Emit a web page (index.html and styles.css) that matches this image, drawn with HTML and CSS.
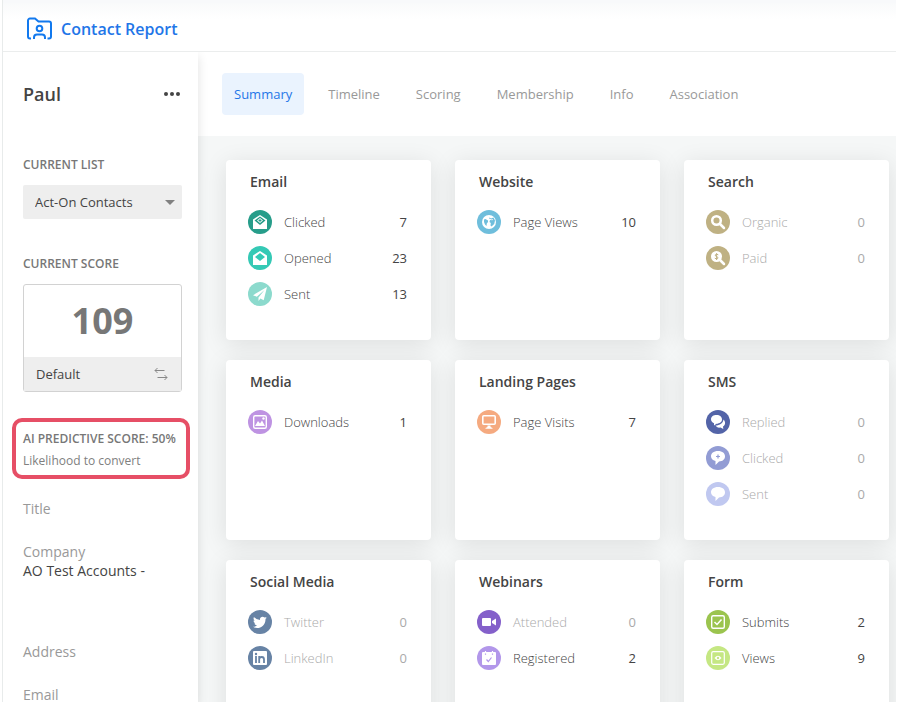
FILE: index.html
```html
<!DOCTYPE html>
<html lang="en">
  <head>
    <meta charset="UTF-8" />
    <meta name="viewport" content="width=device-width, initial-scale=1.0" />
    <title>Contact Report</title>
    <link rel="stylesheet" href="styles.css" />
  </head>
  <body>
    <div class="app">
      <header class="header">
        <svg class="header-icon" viewBox="0 0 26 24" aria-hidden="true">
          <path d="M5 21.5H4a2 2 0 0 1-2-2V3.500a2 2 0 0 1 2-2H9l3.500 3H23a2 2 0 0 1 2 2v13a2 2 0 0 1-2 2H21.500" />
          <circle cx="13.500" cy="11.500" r="2.800" />
          <path d="M8 22v-1.500q0-3 3-3h5q3 0 3 3V22" />
        </svg>
        <h1>Contact Report</h1>
      </header>

      <div class="body">
        <aside class="sidebar">
          <div class="contact">
            <h2>Paul</h2>
            <button type="button" class="more-btn" aria-label="More actions">
              <svg width="18" height="6" viewBox="0 0 18 6">
                <circle cx="2" cy="3" r="2" />
                <circle cx="8" cy="3" r="2" />
                <circle cx="14" cy="3" r="2" />
              </svg>
            </button>
          </div>

          <label class="label" for="list">CURRENT LIST</label>
          <div class="select">
            <select id="list">
              <option>Act-On Contacts</option>
            </select>
          </div>

          <h3 class="label">CURRENT SCORE</h3>
          <div class="score">
            <div class="score-value">109</div>
            <div class="score-footer">
              <span>Default</span>
              <button type="button" class="swap-btn" aria-label="Switch score">
                <svg width="14" height="14" viewBox="0 0 14 14">
                  <path d="M10.500 3.500H1M3.500 1L1 3.500L3.500 6M3.500 10.500H13M10.500 8L13 10.500L10.500 13" />
                </svg>
              </button>
            </div>
          </div>

          <div class="predictive">
            <h3>AI PREDICTIVE SCORE: 50%</h3>
            <p>Likelihood to convert</p>
          </div>

          <dl class="fields">
            <div class="field">
              <dt>Title</dt>
            </div>
            <div class="field field-company">
              <dt>Company</dt>
              <dd>AO Test Accounts -</dd>
            </div>
            <div class="field">
              <dt>Address</dt>
            </div>
            <div class="field">
              <dt>Email</dt>
            </div>
          </dl>
        </aside>

        <main class="main">
          <nav class="tabs">
            <a href="#summary" class="tab active">Summary</a>
            <a href="#timeline" class="tab">Timeline</a>
            <a href="#scoring" class="tab">Scoring</a>
            <a href="#membership" class="tab">Membership</a>
            <a href="#info" class="tab">Info</a>
            <a href="#association" class="tab">Association</a>
          </nav>

          <div class="cards">
            <section class="card">
              <h2>Email</h2>
              <ul>
                <li>
                  <svg class="icon" viewBox="0 0 24 24">
                    <circle cx="12" cy="12" r="12" fill="#279d8a" />
                    <path d="M12 5L19 9.500V19H5V9.500Z" fill="#fff" />
                    <path d="M12 6.500L17.500 10.500L12 15L6.500 10.500Z" fill="#279d8a" />
                    <path d="M12 8L15 10.500L12 13L9 10.500Z" fill="#fff" />
                    <path d="M12 9V12M10.500 10.500H13.500" stroke="#279d8a" />
                  </svg>
                  <span class="name">Clicked</span>
                  <span class="count">7</span>
                </li>
                <li>
                  <svg class="icon" viewBox="0 0 24 24">
                    <circle cx="12" cy="12" r="12" fill="#35c9b5" />
                    <path d="M12 5L19 9.500V19H5V9.500Z" fill="#fff" />
                    <path d="M12 7L17 11L12 15L7 11Z" fill="#35c9b5" />
                  </svg>
                  <span class="name">Opened</span>
                  <span class="count">23</span>
                </li>
                <li>
                  <svg class="icon" viewBox="0 0 24 24">
                    <circle cx="12" cy="12" r="12" fill="#8cdacd" />
                    <path d="M19 5L5 13.200L8.800 14.800L16.500 8L10.500 15.500V19L12.400 16.500L15.700 18.200Z" fill="#fff" />
                  </svg>
                  <span class="name">Sent</span>
                  <span class="count">13</span>
                </li>
              </ul>
            </section>

            <section class="card">
              <h2>Website</h2>
              <ul>
                <li>
                  <svg class="icon" viewBox="0 0 24 24">
                    <circle cx="12" cy="12" r="12" fill="#6fbedc" />
                    <circle cx="12" cy="12" r="7" fill="#fff" />
                    <path d="M7 9.500L8.500 9L11 10.500L11 12L9.800 13.500L9.500 16L8 14.500L7 12ZM12.500 7.500L14 8.500L16.500 7.500L18 10.500L17.200 14L14.500 16.500L13.500 15.500L13.800 13L12.500 12L13 10L15.500 10.200L16.200 9L14.500 9.500L12 8.500Z" fill="#6fbedc" />
                  </svg>
                  <span class="name">Page Views</span>
                  <span class="count">10</span>
                </li>
              </ul>
            </section>

            <section class="card">
              <h2>Search</h2>
              <ul>
                <li class="empty">
                  <svg class="icon" viewBox="0 0 24 24">
                    <circle cx="12" cy="12" r="12" fill="#bfb183" />
                    <circle cx="10.500" cy="10.500" r="4.300" fill="none" stroke="#fff" stroke-width="2.500" />
                    <path d="M14 14L18 18" stroke="#fff" stroke-width="2.500" stroke-linecap="round" />
                  </svg>
                  <span class="name">Organic</span>
                  <span class="count">0</span>
                </li>
                <li class="empty">
                  <svg class="icon" viewBox="0 0 24 24">
                    <circle cx="12" cy="12" r="12" fill="#bfb183" />
                    <circle cx="10.500" cy="10.500" r="5.500" fill="#fff" />
                    <path d="M14 14L18 18" stroke="#fff" stroke-width="2.500" stroke-linecap="round" />
                    <path d="M12.300 8.800Q10.500 7.500 9.300 8.800Q8.700 10 10.700 10.600Q12.700 11.200 11.700 12.500Q10.500 13.500 8.800 12.200M10.600 7.200V14" fill="none" stroke="#bfb183" stroke-width="1" />
                  </svg>
                  <span class="name">Paid</span>
                  <span class="count">0</span>
                </li>
              </ul>
            </section>

            <section class="card">
              <h2>Media</h2>
              <ul>
                <li>
                  <svg class="icon" viewBox="0 0 24 24">
                    <circle cx="12" cy="12" r="12" fill="#be93e2" />
                    <rect x="5.700" y="5.700" width="12.600" height="12.600" rx="1.500" fill="none" stroke="#fff" stroke-width="1.400" />
                    <path d="M7 16L10 11L12 13.500L14 10.500L17 16Z" fill="#fff" />
                    <circle cx="15.500" cy="8.500" r="1.200" fill="#fff" />
                  </svg>
                  <span class="name">Downloads</span>
                  <span class="count">1</span>
                </li>
              </ul>
            </section>

            <section class="card">
              <h2>Landing Pages</h2>
              <ul>
                <li>
                  <svg class="icon" viewBox="0 0 24 24">
                    <circle cx="12" cy="12" r="12" fill="#f5aa80" />
                    <rect x="5.800" y="5.800" width="12.400" height="8.400" rx="1" fill="none" stroke="#fff" stroke-width="1.600" />
                    <path d="M10.500 15.500H13.500V17L15.500 18V18.800H8.500V18L10.500 17Z" fill="#fff" />
                  </svg>
                  <span class="name">Page Visits</span>
                  <span class="count">7</span>
                </li>
              </ul>
            </section>

            <section class="card">
              <h2>SMS</h2>
              <ul>
                <li class="empty">
                  <svg class="icon" viewBox="0 0 24 24">
                    <circle cx="12" cy="12" r="12" fill="#5364a8" />
                    <path d="M17.500 9.500C20 12 19.300 15.500 17 16.500L17.300 19L14.500 17.500C12 18 10.500 17 9.500 15.500C14 15.500 17 13 17.500 9.500Z" fill="#fff" />
                    <path d="M10.500 5C14 5 16 7 16 9.500C16 12 13.500 13.500 10.500 13.800L8 15.500V13.300C6 12.500 5 11 5 9.300C5 6.500 7.500 5 10.500 5Z" fill="#fff" />
                  </svg>
                  <span class="name">Replied</span>
                  <span class="count">0</span>
                </li>
                <li class="empty">
                  <svg class="icon" viewBox="0 0 24 24">
                    <circle cx="12" cy="12" r="12" fill="#929cd4" />
                    <path d="M12 5C16.500 5 19 7.300 19 10.300C19 13.500 16.500 15.500 13 15.500L9.500 19V15C6.500 14.300 5 12.500 5 10.300C5 7.300 7.500 5 12 5Z" fill="#fff" />
                    <path d="M12 8.500V12.500M10 10.500H14" stroke="#929cd4" stroke-width="1.200" />
                  </svg>
                  <span class="name">Clicked</span>
                  <span class="count">0</span>
                </li>
                <li class="empty">
                  <svg class="icon" viewBox="0 0 24 24">
                    <circle cx="12" cy="12" r="12" fill="#c0c8f0" />
                    <path d="M12 5C16.500 5 19 7.300 19 10.300C19 13.500 16.500 15.500 13 15.500L9.500 19V15C6.500 14.300 5 12.500 5 10.300C5 7.300 7.500 5 12 5Z" fill="#fff" />
                  </svg>
                  <span class="name">Sent</span>
                  <span class="count">0</span>
                </li>
              </ul>
            </section>

            <section class="card">
              <h2>Social Media</h2>
              <ul>
                <li class="empty">
                  <svg class="icon" viewBox="0 0 24 24">
                    <circle cx="12" cy="12" r="12" fill="#6783a5" />
                    <path d="M19 7.500L17.500 9.100C17.700 14.500 13.500 18 9.200 18Q7 18 5 16.800Q7.300 16.800 9 15.600Q7 15.200 6.300 13.600H7.500Q5.500 12.600 5.400 10.600L6.700 10.900Q4.800 9 6 7Q8.500 9.900 12 10C11.400 7.500 14.500 5.700 16.500 7.600L18.400 7L17.400 8.300Z" fill="#fff" />
                  </svg>
                  <span class="name">Twitter</span>
                  <span class="count">0</span>
                </li>
                <li class="empty">
                  <svg class="icon" viewBox="0 0 24 24">
                    <circle cx="12" cy="12" r="12" fill="#6783a5" />
                    <rect x="5" y="5" width="14" height="14" rx="1" fill="#fff" />
                    <circle cx="8" cy="8" r="1.200" fill="#6783a5" />
                    <path d="M8 10V17M11.200 17V10M11.200 13Q11.500 11 13.800 11Q16 11 16 13.500V17" fill="none" stroke="#6783a5" stroke-width="1.800" />
                  </svg>
                  <span class="name">LinkedIn</span>
                  <span class="count">0</span>
                </li>
              </ul>
            </section>

            <section class="card">
              <h2>Webinars</h2>
              <ul>
                <li class="empty">
                  <svg class="icon" viewBox="0 0 24 24">
                    <circle cx="12" cy="12" r="12" fill="#8460ca" />
                    <rect x="5" y="8" width="9" height="8" rx="1" fill="#fff" />
                    <path d="M15 11L19 8.500V15.500L15 13Z" fill="#fff" />
                  </svg>
                  <span class="name">Attended</span>
                  <span class="count">0</span>
                </li>
                <li>
                  <svg class="icon" viewBox="0 0 24 24">
                    <circle cx="12" cy="12" r="12" fill="#b297ea" />
                    <rect x="5" y="6" width="14" height="13" rx="1" fill="#fff" />
                    <path d="M8.500 5V6.500M15.500 5V6.500" stroke="#fff" stroke-width="1.200" />
                    <path d="M8.500 7.500V8.700M15.500 7.500V8.700M9.500 13.500L11.300 15.500L14.500 11.500" fill="none" stroke="#b297ea" stroke-width="1.200" />
                  </svg>
                  <span class="name">Registered</span>
                  <span class="count">2</span>
                </li>
              </ul>
            </section>

            <section class="card">
              <h2>Form</h2>
              <ul>
                <li>
                  <svg class="icon" viewBox="0 0 24 24">
                    <circle cx="12" cy="12" r="12" fill="#9bc44e" />
                    <rect x="5.700" y="5.700" width="12.600" height="12.600" rx="1.500" fill="none" stroke="#fff" stroke-width="1.400" />
                    <path d="M8.500 12L11 14.500L15.500 9.500" fill="none" stroke="#fff" stroke-width="1.500" />
                  </svg>
                  <span class="name">Submits</span>
                  <span class="count">2</span>
                </li>
                <li>
                  <svg class="icon" viewBox="0 0 24 24">
                    <circle cx="12" cy="12" r="12" fill="#c5e783" />
                    <rect x="5.700" y="5.700" width="12.600" height="12.600" rx="1.500" fill="none" stroke="#fff" stroke-width="1.200" />
                    <path d="M8.500 12Q12 7.500 15.500 12Q12 16.500 8.500 12Z" fill="#fff" />
                    <circle cx="12" cy="12" r="1.200" fill="#c5e783" />
                  </svg>
                  <span class="name">Views</span>
                  <span class="count">9</span>
                </li>
              </ul>
            </section>
          </div>
        </main>
      </div>
    </div>
  </body>
</html>
```

FILE: styles.css
```css
* {
  margin: 0;
  padding: 0;
  box-sizing: border-box;
}

body {
  font-family: "Open Sans", "Noto Sans", sans-serif;
  font-size: 13px;
  line-height: 20px;
  color: #444;
  background: #fff;
}

button {
  border: none;
  background: none;
  cursor: pointer;
}

.app {
  display: flex;
  flex-direction: column;
  height: 100vh;
  margin: 0 4px 0 2px;
  border-left: 1px solid #e8ebeb;
  overflow: hidden;
}

.header {
  display: flex;
  align-items: center;
  flex-shrink: 0;
  gap: 9px;
  height: 52px;
  padding: 4px 23px 0;
  border-top: 3px solid #f8f9fb;
  border-bottom: 1px solid #ebeded;
  background: linear-gradient(#f9fafb, #fff 16px);
}

.header-icon {
  width: 26px;
  height: 24px;
  fill: none;
  stroke: #1279ee;
  stroke-width: 2;
}

.header h1 {
  font-size: 16px;
  font-weight: 600;
  color: #1f76e8;
}

.body {
  display: flex;
  flex: 1;
  min-height: 0;
  overflow: hidden;
}

/* Sidebar */
.sidebar {
  position: relative;
  flex-shrink: 0;
  width: 195px;
  padding: 30px 16px 0 20px;
  background: #fff;
  box-shadow: 0 4px 10px rgba(0, 0, 0, 0.12);
}

.contact {
  display: flex;
  align-items: center;
  justify-content: space-between;
  height: 24px;
  margin-bottom: 49px;
}

.contact h2 {
  font-size: 18px;
  font-weight: 600;
}

.more-btn {
  display: flex;
  fill: #444;
}

.label {
  display: block;
  margin-bottom: 10px;
  font-size: 12px;
  font-weight: 600;
  color: #777;
}

.select {
  display: grid;
  align-items: center;
  margin-bottom: 35px;
}

.select select,
.select::after {
  grid-area: 1 / 1;
}

.select select {
  width: 100%;
  height: 34px;
  padding: 0 24px 0 12px;
  border: none;
  border-radius: 2px;
  background: #eee;
  color: #444;
  font-family: inherit;
  font-size: 13px;
  appearance: none;
}

.select::after {
  content: "";
  justify-self: end;
  margin-right: 7px;
  border: 5px solid transparent;
  border-top-color: #808080;
  border-bottom: none;
  pointer-events: none;
}

.score {
  margin-bottom: 26px;
  border: 1px solid #d2d2d2;
  border-radius: 3px;
}

.score-value {
  font-size: 36px;
  font-weight: 700;
  line-height: 72px;
  text-align: center;
  color: #777;
}

.score-footer {
  display: flex;
  align-items: center;
  justify-content: space-between;
  height: 34px;
  padding: 0 13px 0 12px;
  background: #eee;
}

.swap-btn {
  display: flex;
}

.swap-btn svg {
  fill: none;
  stroke: #888;
}

.predictive {
  margin: 0 -8px 20px -11px;
  padding: 7px 0 4px 7px;
  border: 4px solid #e64f66;
  border-radius: 10px;
}

.predictive h3 {
  margin-bottom: 2px;
  font-size: 12px;
  font-weight: 600;
  white-space: nowrap;
  color: #777;
}

.predictive p {
  font-size: 12px;
  color: #808080;
}

.fields {
  font-size: 14px;
  line-height: 19px;
}

.field {
  margin-bottom: 24px;
}

.field-company {
  margin-bottom: 62px;
}

.field dt {
  color: #999;
}

/* Main area */
.main {
  display: flex;
  flex: 1;
  flex-direction: column;
  min-width: 0;
}

.tabs {
  display: flex;
  flex-shrink: 0;
  gap: 12px;
  padding: 21px 24px;
}

.tab {
  padding: 11px 12px;
  border-radius: 4px;
  color: #999;
  text-decoration: none;
}

.tab.active {
  background: #eaf3fe;
  color: #1f76e8;
}

.cards {
  display: grid;
  flex: 1;
  grid-template-columns: repeat(3, 1fr);
  grid-auto-rows: 180px;
  gap: 20px 24px;
  padding: 24px 7px 0 28px;
  background: #f5f7f7;
  overflow: hidden;
}

.card {
  padding: 12px 24px 12px 22px;
  border-radius: 4px;
  background: #fff;
  box-shadow: 0 4px 24px rgba(0, 0, 0, 0.1);
}

.card h2 {
  margin: 0 0 18px 2px;
  font-size: 14px;
  font-weight: 600;
}

.card ul {
  display: flex;
  flex-direction: column;
  gap: 12px;
  list-style: none;
}

.card li {
  display: flex;
  align-items: center;
  gap: 12px;
}

.icon {
  width: 24px;
  height: 24px;
}

.name {
  flex: 1;
  font-weight: 300;
}

.empty .name,
.empty .count {
  color: #aaa;
}
```
